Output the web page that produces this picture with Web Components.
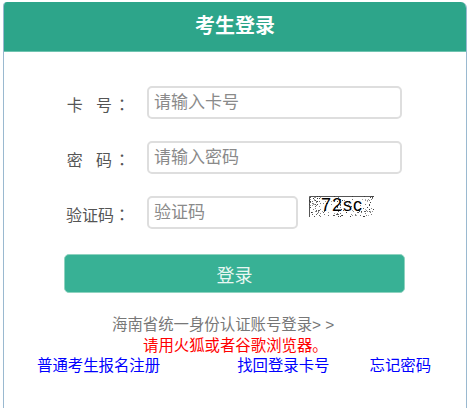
<!DOCTYPE html>
<html lang="zh">
<head>
<meta charset="utf-8">
<title>考生登录</title>
<style>
  html, body { margin: 0; background: #fff; }
  body { padding: 2px 3px 0; font-family: "Liberation Sans", "Noto Sans CJK SC", sans-serif; }
</style>
</head>
<body>
<login-card heading="考生登录">
  <login-field label="卡&nbsp;&nbsp;&nbsp;号" placeholder="请输入卡号" spaced></login-field>
  <login-field label="密&nbsp;&nbsp;&nbsp;码" placeholder="请输入密码" spaced></login-field>
  <login-field label="验证码" placeholder="验证码" short>
    <captcha-image text="72sc"></captcha-image>
  </login-field>
  <login-button>登录</login-button>
  <login-links></login-links>
</login-card>

<script>
class LoginCard extends HTMLElement {
  connectedCallback() {
    this.attachShadow({ mode: 'open' });
    this.shadowRoot.innerHTML = `
      <style>
        :host { display: block; width: 464px; height: 406px; box-sizing: border-box;
          border: solid #9ab9d0; border-width: 0 1px; border-radius: 4px 6px 0 0; overflow: hidden; background: #fff; }
        header { height: 50px; background: #2da58a; border-bottom: 1px solid #6fc3b0; box-sizing: border-box;
          color: #fff; font-size: 20px; font-weight: 700; line-height: 48px; text-align: center; }
        .body { padding: 34px 0 0 60px; display: flex; flex-direction: column; align-items: flex-start; }
      </style>
      <header>${this.getAttribute('heading')}</header>
      <div class="body"><slot></slot></div>
    `;
  }
}
customElements.define('login-card', LoginCard);

class LoginField extends HTMLElement {
  connectedCallback() {
    this.attachShadow({ mode: 'open' });
    const w = this.hasAttribute('short') ? 151 : 255;
    this.shadowRoot.innerHTML = `
      <style>
        :host { display: flex; height: 33px; margin-bottom: 22px; align-items: flex-start; }
        label { width: 83px; box-sizing: border-box; padding: 6px 17px 0 0; font-size: 16px; line-height: 24px; color: #555; white-space: nowrap; text-align: right; }
        label span { font-family: "Noto Sans CJK TC", sans-serif; }
        :host([spaced]) label span { margin-left: 2px; }
        input { width: ${w}px; height: 33px; box-sizing: border-box; margin: 0; padding: 0 5px;
          border: 2px solid #dedede; border-radius: 5px; background: #fff; outline: 0;
          font: 17px "Liberation Sans", "Noto Sans CJK SC", sans-serif; }
        input::placeholder { color: #8a8a8a; opacity: 1; }
        ::slotted(*) { margin-left: 11px; }
      </style>
      <label>${this.getAttribute('label')}<span lang="zh-TW">：</span></label>
      <input type="text" placeholder="${this.getAttribute('placeholder')}">
      <slot></slot>
    `;
  }
}
customElements.define('login-field', LoginField);

class CaptchaImage extends HTMLElement {
  connectedCallback() {
    this.attachShadow({ mode: 'open' });
    // fixed speckle so each run looks the same, thicker towards the edges
    let seed = 7, dots = '';
    const next = () => (seed = (seed * 9301 + 49297) % 233280) / 233280;
    for (let i = 0; i < 260; i++) {
      const x = Math.floor(next() * 65), y = Math.floor(next() * 21);
      const edge = x < 12 || x > 54 || y > 14;
      if (!edge && next() > 0.25) continue;
      dots += `<rect x="${x}" y="${y}" width="1" height="1" fill="#333" opacity="${(0.4 + next() * 0.6).toFixed(2)}"/>`;
    }
    this.shadowRoot.innerHTML = `
      <style>
        :host { display: block; position: relative; width: 65px; height: 21px; background: #fff; }
        svg { position: absolute; inset: 0; }
        span { position: absolute; left: 12px; top: 0; font: 18px/18px "Liberation Sans", sans-serif; letter-spacing: 1px; color: #000; }
      </style>
      <svg width="65" height="21" viewBox="0 0 65 21">
        <path d="M0.5 21V0.5H65" fill="none" stroke="#555"/>
        ${dots}
      </svg>
      <span>${this.getAttribute('text')}</span>
    `;
  }
}
customElements.define('captcha-image', CaptchaImage);

class LoginButton extends HTMLElement {
  connectedCallback() {
    this.attachShadow({ mode: 'open' });
    this.shadowRoot.innerHTML = `
      <style>
        :host { display: block; width: 341px; margin-top: 3px; }
        button { display: block; width: 100%; height: 39px; padding: 0; border: 1px solid #8fd3c0; border-radius: 5px;
          background: #38b195; color: #e8f7f2; font: 18px "Liberation Sans", "Noto Sans CJK SC", sans-serif; }
      </style>
      <button type="button"><slot></slot></button>
    `;
  }
}
customElements.define('login-button', LoginButton);

class LoginLinks extends HTMLElement {
  connectedCallback() {
    this.attachShadow({ mode: 'open' });
    this.shadowRoot.innerHTML = `
      <style>
        :host { display: block; width: 462px; margin-left: -60px; font-size: 15.4px; line-height: 20px; box-sizing: border-box; }
        p { margin: 0; }
        .sso { margin-top: 22px; padding-left: 108px; color: #777; }
        .warn { padding: 1px 0 0 139px; color: #f00; }
        nav { display: flex; padding-left: 33px; }
        a { color: #00f; text-decoration: none; white-space: nowrap; }
        a:nth-child(2) { margin-left: 77px; }
        a:nth-child(3) { margin-left: 40px; }
      </style>
      <p class="sso">海南省统一身份认证账号登录&gt; &gt;</p>
      <p class="warn">请用火狐或者谷歌浏览器。</p>
      <nav>
        <a href="#">普通考生报名注册</a>
        <a href="#">找回登录卡号</a>
        <a href="#">忘记密码</a>
      </nav>
    `;
  }
}
customElements.define('login-links', LoginLinks);
</script>
</body>
</html>
